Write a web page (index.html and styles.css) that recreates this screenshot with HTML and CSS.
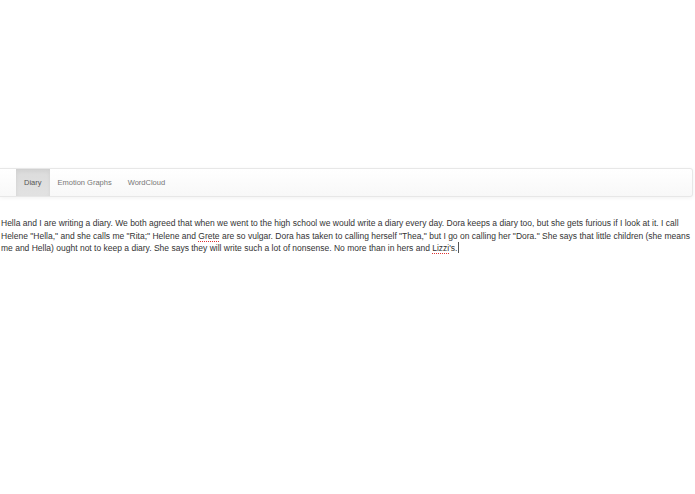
FILE: index.html
```html
<!DOCTYPE html>
<html>
<head>
<meta charset="utf-8">
<link rel="stylesheet" href="styles.css">
</head>
<body>
<nav class="navbar">
  <ul class="nav">
    <li class="tab active">Diary</li>
    <li class="tab">Emotion Graphs</li>
    <li class="tab">WordCloud</li>
  </ul>
</nav>
<div class="diary">Hella and I are writing a diary. We both agreed that when we went to the high school we would write a diary every day. Dora keeps a diary too, but she gets furious if I look at it. I call<br>Helene "Hella," and she calls me "Rita;" Helene and <span class="spell">Grete</span> are so vulgar. Dora has taken to calling herself "Thea," but I go on calling her "Dora." She says that little children (she means<br>me and Hella) ought not to keep a diary. She says they will write such a lot of nonsense. No more than in hers and <span class="spell">Lizzi</span>'s.<span class="caret"></span></div>
</body>
</html>
```
FILE: styles.css
```css
html, body {
  margin: 0;
  padding: 0;
  background: #fff;
}
body {
  font-family: "Liberation Sans", Arial, sans-serif;
  color: #333;
}
.navbar {
  margin-top: 168px;
  width: 692px;
  height: 27px;
  border: 1px solid #e7e7e7;
  border-left: none;
  border-radius: 0 3px 3px 0;
  background: linear-gradient(to bottom, #ffffff 0%, #f8f8f8 100%);
  box-shadow: inset 0 1px 0 rgba(255,255,255,.15), 0 1px 4px rgba(0,0,0,.06);
}
.nav {
  list-style: none;
  margin: 0;
  padding: 0 0 0 16px;
  display: flex;
  height: 100%;
}
.tab {
  font-size: 7.5px;
  color: #777;
  padding: 0 8px;
  display: flex;
  align-items: center;
  height: 100%;
}
.tab.active {
  color: #555;
  background: linear-gradient(to bottom, #dbdbdb 0%, #e2e2e2 100%);
  box-shadow: inset 0 2px 4px rgba(0,0,0,.06);
}
.diary {
  margin-top: 20px;
  padding: 0 0 0 1px;
  font-size: 8.5px;
  line-height: 12.6px;
  color: #333;
  white-space: nowrap;
}
.spell {
  text-decoration: underline dotted #d33;
  text-underline-offset: 2px;
}
.caret {
  display: inline-block;
  width: 1px;
  height: 11px;
  background: #555;
  vertical-align: -2px;
  margin-left: 1px;
}
```
